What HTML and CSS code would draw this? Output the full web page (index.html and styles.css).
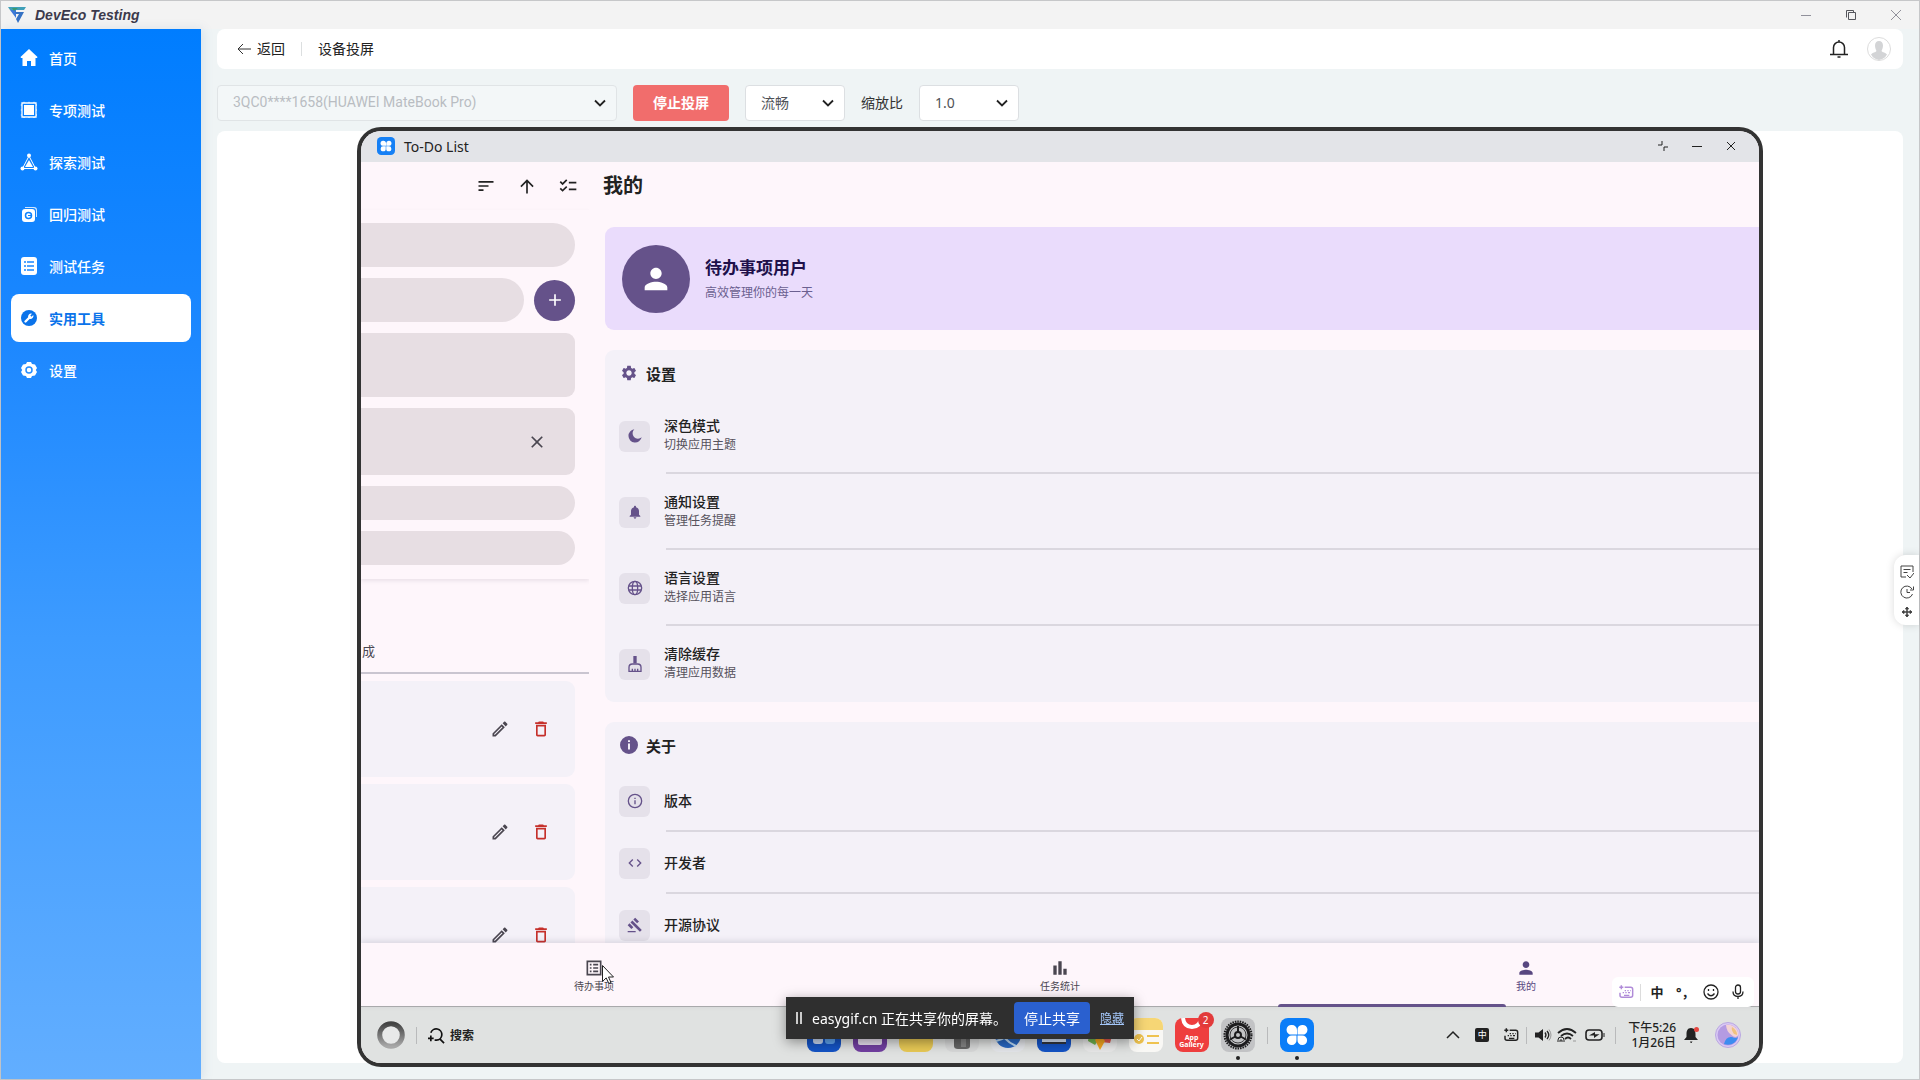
FILE: index.html
```html
<!DOCTYPE html>
<html lang="zh-CN">
<head>
    <meta charset="UTF-8">
    <meta name="viewport" content="width=device-width, initial-scale=1.0">
    <title>DevEco Testing</title>
    <link rel="stylesheet" href="styles.css">
</head>
<body>
    <!-- 图标库 -->
    <svg class="sprite" aria-hidden="true">
        <symbol id="i-chevron" viewBox="0 0 12 12"><path d="M1 3.5l5 5 5-5" fill="none" stroke="currentColor" stroke-width="1.8"/></symbol>
        <symbol id="i-person" viewBox="0 0 24 24"><path d="M12 12c2.2 0 4-1.8 4-4s-1.8-4-4-4-4 1.8-4 4 1.8 4 4 4zm0 2c-2.7 0-8 1.3-8 4v2h16v-2c0-2.7-5.300-4-8-4z"/></symbol>
        <symbol id="i-close" viewBox="0 0 24 24"><path d="M19 6.400L17.600 5 12 10.600 6.400 5 5 6.400 10.600 12 5 17.600 6.400 19 12 13.400 17.600 19 19 17.600 13.400 12z"/></symbol>
        <symbol id="i-edit" viewBox="0 0 24 24"><path d="M14.060 9.020l.920.920L5.920 19H5v-.920l9.060-9.060M17.660 3c-.250 0-.510.100-.700.290l-1.830 1.830 3.750 3.750 1.830-1.830c.390-.390.390-1.020 0-1.410l-2.340-2.340c-.200-.200-.450-.290-.710-.290zm-3.600 3.190L3 17.250V21h3.750L17.810 9.940l-3.750-3.750z"/></symbol>
        <symbol id="i-delete" viewBox="0 0 24 24"><path d="M6 19c0 1.100.9 2 2 2h8c1.100 0 2-.9 2-2V7H6v12zM8 9h8v10H8V9zm7.500-5l-1-1h-5l-1 1H5v2h14V4z"/></symbol>
        <symbol id="i-gear" viewBox="0 0 24 24"><path d="M19.140 12.940c.040-.300.060-.610.060-.940 0-.320-.020-.640-.070-.940l2.030-1.580c.180-.140.230-.410.120-.610l-1.920-3.320c-.120-.220-.370-.290-.590-.220l-2.390.960c-.500-.380-1.030-.700-1.620-.940l-.360-2.540c-.040-.240-.240-.410-.480-.410h-3.840c-.240 0-.430.170-.470.410l-.360 2.540c-.590.240-1.130.570-1.620.940l-2.390-.960c-.220-.080-.470 0-.590.220L2.740 8.870c-.120.210-.080.470.120.610l2.030 1.580c-.050.300-.090.630-.090.940s.020.640.070.940l-2.030 1.580c-.180.140-.230.410-.120.610l1.920 3.320c.120.220.370.290.590.220l2.390-.960c.500.380 1.030.700 1.620.940l.360 2.540c.050.240.240.410.480.410h3.840c.240 0 .440-.170.470-.410l.360-2.540c.590-.240 1.130-.560 1.620-.940l2.390.960c.220.080.470 0 .590-.220l1.920-3.320c.120-.220.070-.470-.120-.610l-2.010-1.580zM12 15.600c-1.980 0-3.600-1.620-3.600-3.600s1.620-3.600 3.600-3.600 3.600 1.620 3.600 3.600-1.620 3.600-3.600 3.600z"/></symbol>
        <symbol id="i-keyboard" viewBox="0 0 24 24"><path d="M10 5h9a3 3 0 013 3v9a3 3 0 01-3 3H6a3 3 0 01-3-3v-4M5 2v6M2 5h6" fill="none" stroke="currentColor" stroke-width="2.200"/><path d="M10 10h2M14 10h2M18 10h1M7 13h2M11 13h2M15 13h3M9 17h8" stroke="currentColor" stroke-width="2"/></symbol>
        <symbol id="i-clover" viewBox="0 0 34 34"><path d="M12 7a5 5 0 015 5v4.500h-5A4.800 4.800 0 1112 7zM22 7a4.800 4.800 0 110 9.500h-4.500V12A5 5 0 0122 7zM12 17.500h4.500V22a4.800 4.800 0 11-4.500-4.500zM17.500 17.500H22a4.800 4.800 0 11-4.500 4.500z" fill="#fff"/></symbol>
    </svg>

    <div class="window">
        <header class="titlebar">
            <svg class="logo" viewBox="0 0 18 16"><path d="M0 0h18l-2 3H2z" fill="#3f9fb8"/><path d="M2 3h6v8z" fill="#3c79d8"/><path d="M7 5h9l-6 11-2-4 3-5H8z" fill="#3672c4"/><path d="M4 1h6L6 4z" fill="#3a9a70"/></svg>
            <span class="app-name">DevEco Testing</span>
            <div class="window-controls">
                <button aria-label="最小化"><svg viewBox="0 0 12 12"><path d="M1 6.500h10"/></svg></button>
                <button class="restore" aria-label="还原"><svg viewBox="0 0 12 12"><path d="M3.500 3.500h7v7h-7zM1.500 8.500v-7h7v2"/></svg></button>
                <button aria-label="关闭"><svg viewBox="0 0 12 12"><path d="M1 1l10 10M11 1L1 11"/></svg></button>
            </div>
        </header>

        <div class="layout">
            <nav class="sidebar">
                <a href="#"><svg viewBox="0 0 18 18"><path d="M9 0l8.500 8-.5 1h-1.500v8H11v-5H7v5H2.500V9H1L.5 8z"/></svg>首页</a>
                <a href="#"><svg viewBox="0 0 18 18"><path d="M4 4h10v10H4z"/><path d="M2 2h14v14H2z" fill="none" stroke="#fff" stroke-width="1.300"/><path d="M4 .8v1M9 .8v1M14 .8v1M4 16v1M9 16v1M14 16v1M.8 4h1M.8 9h1M.8 14h1M16 4h1M16 9h1M16 14h1" stroke="#fff"/></svg>专项测试</a>
                <a href="#"><svg viewBox="0 0 18 18"><circle cx="9" cy="2.500" r="2"/><circle cx="2.500" cy="15.500" r="2"/><circle cx="15.500" cy="15.500" r="2"/><path d="M9 7l4 7H5z"/><path d="M9 3l6.500 12.500h-13z" fill="none" stroke="#fff"/></svg>探索测试</a>
                <a href="#"><svg viewBox="0 0 18 18"><path d="M5 3V2h9a3 3 0 013 3v7h-1V6a3 3 0 00-3-3z" opacity=".8"/><rect x="2" y="4" width="13" height="13" rx="3"/><circle cx="8.500" cy="10.500" r="3" fill="none" stroke="#0d82ff" stroke-width="1.500"/><path d="M8 10.500h3" stroke="#0d82ff"/></svg>回归测试</a>
                <a href="#"><svg viewBox="0 0 18 18"><rect x="1" y="0" width="16" height="18" rx="3"/><path d="M4 5h2M7 5h7M4 9h2M7 9h7M4 13h2M7 13h7" stroke="#1a87ff" stroke-width="1.500"/></svg>测试任务</a>
                <a href="#" class="active"><svg viewBox="0 0 18 18"><circle cx="9" cy="9" r="8"/><path d="M5.500 12.500l4-4" stroke="#fff" stroke-width="2.400" stroke-linecap="round"/><path d="M12 4.700a3 3 0 00-3.800 3.800l1.300 1.300a3 3 0 003.800-3.800l-1.800 1.700-1.200-1.200z" fill="#fff"/></svg>实用工具</a>
                <a href="#"><svg viewBox="0 0 18 18"><path d="M7 1h4l1 2 3 .5 2 3.500-1.200 2L17 11l-2 3.500-3 .5-1 2H7l-1-2-3-.5L1 11l1.200-2L1 7l2-3.500L6 3z"/><circle cx="9" cy="9" r="3" fill="none" stroke="#258dff" stroke-width="1.500"/></svg>设置</a>
            </nav>

            <main class="main">
                <div class="page-head">
                    <a class="back" href="#"><svg viewBox="0 0 14 12"><path d="M6 1L1 6l5 5M1 6h13"/></svg>返回</a>
                    <span class="page-name">设备投屏</span>
                    <button class="icon-btn" aria-label="消息"><svg viewBox="0 0 18 18"><path d="M3.500 14.500V7.500a5.500 5.500 0 0111 0v7M0 14.500h18M9 0v2M7.500 17h3"/></svg></button>
                    <button class="avatar" aria-label="用户"><svg viewBox="0 0 24 24"><circle cx="12" cy="12" r="11.500" fill="#fff" stroke="#dcdcdc"/><path d="M12 4c2.500 0 4 2 4 4.500S15 13 14.500 14c1 1.500 4 1.500 5.500 3.500A11 11 0 0112 23a11 11 0 01-8-5.500C5.500 15.500 8.500 15.500 9.500 14 9 13 8 11 8 8.500S9.500 4 12 4z" fill="#d3d4d6"/></svg></button>
                </div>

                <div class="toolbar">
                    <div class="select-box device-select">
                        <select aria-label="设备" disabled><option>3QC0****1658(HUAWEI MateBook Pro)</option></select>
                        <svg><use href="#i-chevron"/></svg>
                    </div>
                    <button class="stop-btn">停止投屏</button>
                    <div class="select-box">
                        <select aria-label="画质"><option>流畅</option></select>
                        <svg><use href="#i-chevron"/></svg>
                    </div>
                    <label for="scale">缩放比</label>
                    <div class="select-box">
                        <select id="scale"><option>1.0</option></select>
                        <svg><use href="#i-chevron"/></svg>
                    </div>
                </div>

                <section class="cast-panel">
                    <div class="device">
                        <div class="device-title">
                            <svg class="todo-icon" viewBox="0 0 34 34"><rect width="34" height="34" rx="8" fill="#1680f5"/><use href="#i-clover"/></svg>
                            <span>To-Do List</span>
                            <div class="device-controls">
                                <button aria-label="缩小"><svg viewBox="0 0 12 12"><path d="M5 1v4H1M7 11V7h4"/></svg></button>
                                <button aria-label="最小化"><svg viewBox="0 0 12 12"><path d="M1 6.500h10"/></svg></button>
                                <button aria-label="关闭"><svg viewBox="0 0 12 12"><path d="M2 2l8 8M10 2l-8 8"/></svg></button>
                            </div>
                        </div>

                        <div class="app">
                            <div class="list-pane">
                                <div class="list-tools">
                                    <button aria-label="排序"><svg viewBox="0 0 24 24"><path d="M3 18h6v-2H3v2zM3 6v2h18V6H3zm0 7h12v-2H3v2z"/></svg></button>
                                    <button aria-label="升序"><svg viewBox="0 0 24 24"><path d="M4 12l1.400 1.400L11 7.800V21h2V7.800l5.600 5.600L20 12l-8-8z"/></svg></button>
                                    <button aria-label="多选"><svg viewBox="0 0 24 24"><path d="M22 7h-9v2h9V7zm0 8h-9v2h9v-2zM5.500 11L2 7.500l1.400-1.400 2.100 2.100 4.300-4.200 1.400 1.400L5.500 11zm0 8L2 15.500l1.400-1.400 2.100 2.100 4.300-4.200 1.400 1.400L5.500 19z"/></svg></button>
                                </div>
                                <div class="form">
                                    <div class="field pill"></div>
                                    <div class="field-row">
                                        <div class="field pill"></div>
                                        <button class="add-btn" aria-label="添加"><svg viewBox="0 0 24 24"><path d="M19 13h-6v6h-2v-6H5v-2h6V5h2v6h6z"/></svg></button>
                                    </div>
                                    <div class="field"></div>
                                    <div class="field tall"><button aria-label="清除"><svg><use href="#i-close"/></svg></button></div>
                                    <div class="field chip"></div>
                                    <div class="field chip"></div>
                                </div>
                                <div class="tabs">成</div>
                                <div class="tasks">
                                    <div class="task">
                                        <button aria-label="编辑"><svg><use href="#i-edit"/></svg></button>
                                        <button class="del" aria-label="删除"><svg><use href="#i-delete"/></svg></button>
                                    </div>
                                    <div class="task">
                                        <button aria-label="编辑"><svg><use href="#i-edit"/></svg></button>
                                        <button class="del" aria-label="删除"><svg><use href="#i-delete"/></svg></button>
                                    </div>
                                    <div class="task">
                                        <button aria-label="编辑"><svg><use href="#i-edit"/></svg></button>
                                        <button class="del" aria-label="删除"><svg><use href="#i-delete"/></svg></button>
                                    </div>
                                </div>
                            </div>

                            <div class="mine-pane">
                                <h1>我的</h1>
                                <div class="cards">
                                    <div class="profile">
                                        <div class="profile-icon"><svg><use href="#i-person"/></svg></div>
                                        <div>
                                            <strong>待办事项用户</strong>
                                            <p>高效管理你的每一天</p>
                                        </div>
                                    </div>

                                    <div class="card">
                                        <h2><svg><use href="#i-gear"/></svg>设置</h2>
                                        <div class="item">
                                            <span class="item-icon"><svg viewBox="0 0 24 24"><path d="M11 2a10 10 0 1011 12 6.500 6.500 0 01-11-12z"/></svg></span>
                                            <div class="item-text"><b>深色模式</b><small>切换应用主题</small></div>
                                        </div>
                                        <div class="item">
                                            <span class="item-icon"><svg viewBox="0 0 24 24"><path d="M12 22c1.100 0 2-.9 2-2h-4c0 1.100.9 2 2 2zm6-6v-5c0-3.100-1.600-5.600-4.500-6.300V4c0-.8-.7-1.500-1.500-1.500s-1.500.7-1.500 1.500v.7C7.600 5.400 6 7.900 6 11v5l-2 2v1h16v-1z"/></svg></span>
                                            <div class="item-text"><b>通知设置</b><small>管理任务提醒</small></div>
                                        </div>
                                        <div class="item">
                                            <span class="item-icon"><svg class="line" viewBox="0 0 24 24"><circle cx="12" cy="12" r="10"/><ellipse cx="12" cy="12" rx="4" ry="10"/><path d="M3 9h18M3 15h18"/></svg></span>
                                            <div class="item-text"><b>语言设置</b><small>选择应用语言</small></div>
                                        </div>
                                        <div class="item">
                                            <span class="item-icon"><svg viewBox="0 0 24 24"><path d="M9.500 0h5v11h-5z"/><path class="line" d="M3 23v-6a5 5 0 015-5h8a5 5 0 015 5v6zM8 23v-4M12 23v-4M16 23v-4"/></svg></span>
                                            <div class="item-text"><b>清除缓存</b><small>清理应用数据</small></div>
                                        </div>
                                    </div>

                                    <div class="card about">
                                        <h2><svg viewBox="0 0 24 24"><path d="M12 0a12 12 0 100 24 12 12 0 000-24zm1.300 18h-2.600v-8h2.600zm0-10h-2.600V5.500h2.600z"/></svg>关于</h2>
                                        <div class="item">
                                            <span class="item-icon"><svg class="line" viewBox="0 0 24 24"><circle cx="12" cy="12" r="10"/><path d="M12 11v6M12 7v2"/></svg></span>
                                            <div class="item-text"><b>版本</b></div>
                                        </div>
                                        <div class="item">
                                            <span class="item-icon"><svg viewBox="0 0 24 24"><path d="M9.400 16.600L4.800 12l4.600-4.600L8 6l-6 6 6 6 1.400-1.400zm5.200 0l4.600-4.600-4.600-4.600L16 6l6 6-6 6-1.400-1.400z"/></svg></span>
                                            <div class="item-text"><b>开发者</b></div>
                                        </div>
                                        <div class="item">
                                            <span class="item-icon"><svg viewBox="0 0 24 24"><path d="M1 21h12v2H1v-2zM5.200 8.100l2.900-2.900 14.100 14.200-2.800 2.800L5.200 8.100zM12.300 1l5.700 5.700-2.900 2.800-5.600-5.700L12.300 1zM3.800 9.500l5.700 5.700L6.600 18 1 12.300l2.800-2.800z"/></svg></span>
                                            <div class="item-text"><b>开源协议</b></div>
                                        </div>
                                    </div>
                                </div>
                            </div>
                        </div>

                        <nav class="app-nav">
                            <a href="#"><svg viewBox="0 0 24 24"><path d="M19 5v14H5V5h14m2-2H3v18h18zM11 7h6v2h-6V7zm0 4h6v2h-6v-2zm0 4h6v2h-6zM7 7h2v2H7zm0 4h2v2H7zm0 4h2v2H7z"/></svg>待办事项</a>
                            <a href="#"><svg viewBox="0 0 24 24"><path d="M4 9h4v11H4zM10 4h4v16h-4zM16 13h4v7h-4z"/></svg>任务统计</a>
                            <a href="#" class="active"><svg><use href="#i-person"/></svg>我的</a>
                        </nav>

                        <div class="taskbar">
                            <div class="task-left">
                                <svg class="ring" viewBox="0 0 28 28"><defs><linearGradient id="ring" x2="0" y2="1"><stop stop-color="#444"/><stop offset="1" stop-color="#a8a8a8"/></linearGradient></defs><circle cx="14" cy="14" r="11.300" fill="#f4f4f4" fill-opacity=".4" stroke="url(#ring)" stroke-width="5"/></svg>
                                <span class="sep"></span>
                                <svg class="search" viewBox="0 0 18 18"><path d="M3 6a6 6 0 116 8H7M13 13l4 4M3 9v6M0 12h6"/></svg>
                                <span>搜索</span>
                            </div>
                            <div class="dock">
                                <svg viewBox="0 0 34 34"><rect width="34" height="34" rx="8" fill="#1453c4"/><rect x="6" y="8" width="10" height="18" rx="3" fill="#c7d5ef"/><rect x="18" y="8" width="10" height="18" rx="3" fill="#5fa3ee"/></svg>
                                <svg viewBox="0 0 34 34"><rect width="34" height="34" rx="8" fill="#713fa0"/><rect x="5" y="8" width="24" height="19" rx="2" fill="#e8e0ef"/></svg>
                                <svg viewBox="0 0 34 34"><rect width="34" height="34" rx="8" fill="#e8c955"/><path d="M0 12h34v8H0z" fill="#bfbf51"/></svg>
                                <svg viewBox="0 0 34 34"><rect width="34" height="34" rx="8" fill="#d8d9d9"/><path d="M9 6h16v22q0 3-4 3h-8q-4 0-4-3z" fill="#656565"/><path d="M16 8h5v21h-5z" fill="#858585"/></svg>
                                <svg viewBox="0 0 34 34"><rect width="34" height="34" rx="8" fill="#e4e6ea"/><circle cx="17" cy="17" r="13" fill="#2867c2"/><path d="M5 23q12-2 20-16M8 8q3 14 17 20" fill="none" stroke="#bcd9f4" stroke-width="2"/></svg>
                                <svg viewBox="0 0 34 34"><rect width="34" height="34" rx="8" fill="#1453c4"/><rect x="5" y="7" width="24" height="18" fill="#d6e3f7"/><path d="M5 25h24" stroke="#30343d" stroke-width="2"/></svg>
                                <svg viewBox="0 0 34 34"><rect width="34" height="34" rx="8" fill="#e9e9e9"/><path d="M6 16l10 5-4 6-7-4z" fill="#71b24f"/><path d="M15 16l14 2-2 7-9-1z" fill="#df574e"/><path d="M12 22l5-5 5 6-5 9z" fill="#f3a51e"/></svg>
                                <svg viewBox="0 0 34 34"><rect width="34" height="34" rx="8" fill="#f9f8f5"/><path d="M0 12V8a8 8 0 018-8h18a8 8 0 018 8v4z" fill="#f6d675"/><circle cx="10" cy="21" r="5" fill="#efc34f"/><path d="M8 21l2 2 3-4" fill="none" stroke="#fff"/><path d="M18 18h12M18 25h12" stroke="#efc34f" stroke-width="2"/></svg>
                                <div class="dock-app">
                                    <span class="gallery"><svg viewBox="0 0 34 16"><path d="M8 0q1 9 9 9t9-9" fill="none" stroke="#fff" stroke-width="4"/></svg>App<br>Gallery</span>
                                    <span class="badge">2</span>
                                </div>
                                <div class="dock-app running">
                                    <svg viewBox="0 0 34 34"><rect width="34" height="34" rx="8" fill="#c2c3c5"/><circle cx="17" cy="17" r="13.500" fill="none" stroke="#1c1c1e" stroke-width="2" stroke-dasharray="1.500 1"/><circle cx="17" cy="17" r="11" fill="none" stroke="#1c1c1e" stroke-width="3"/><circle cx="17" cy="17" r="8" fill="none" stroke="#3a3a3c"/><circle cx="17" cy="17" r="3" fill="none" stroke="#1c1c1e" stroke-width="2"/><path d="M17 14V8M14.400 18.500L9 21.500M19.600 18.500l5.400 3" stroke="#1c1c1e" stroke-width="2"/></svg>
                                </div>
                                <span class="sep"></span>
                                <div class="dock-app running">
                                    <svg viewBox="0 0 34 34"><rect width="34" height="34" rx="8" fill="#0a7df8"/><use href="#i-clover"/></svg>
                                </div>
                            </div>
                            <div class="tray">
                                <svg viewBox="0 0 14 14"><path d="M1 10l6-6 6 6" fill="none" stroke="#222" stroke-width="1.500"/></svg>
                                <span class="lang">中</span>
                                <svg class="kbd"><use href="#i-keyboard"/></svg>
                                <span class="sep"></span>
                                <svg class="wide" viewBox="0 0 18 14"><path d="M1 4.500h3.500L9 1v12L4.500 9.500H1z"/><path d="M11 4.500q2 2.500 0 5M13 3q3.500 4 0 8" fill="none" stroke="#222" stroke-width="1.300"/><path d="M15 1.500q4 5.500 0 11" fill="none" stroke="#999"/></svg>
                                <svg class="wifi" viewBox="0 0 20 16"><path d="M1 6q9-8 18 0M4 9q6-5 12 0M8 12q3-3 6 0" fill="none" stroke="#222" stroke-width="1.800"/><path d="M1 15v-2a3 3 0 016 0v2M3 15v-2h2v2" fill="none" stroke="#222"/><path d="M16 14h3" stroke="#999"/></svg>
                                <svg class="wifi" viewBox="0 0 20 16"><rect x="1" y="3" width="16" height="10" rx="3" fill="none" stroke="#222" stroke-width="1.600"/><path d="M4 8.500L10 5v2.300h4.500L9 11V8.500zM18.500 6h1v4h-1z"/></svg>
                                <span class="sep"></span>
                                <time>下午5:26<br>1月26日</time>
                                <svg class="bell" viewBox="0 0 16 16"><path d="M7 14.500h2.500L8.500 16H7.700zM8 1C4.500 1 3.500 4 3.500 7v3L1 13h14l-2.500-3V7c0-3-1-6-4.500-6z"/><circle cx="13.500" cy="2.500" r="2.500" fill="#e5453f"/></svg>
                                <svg class="orb" viewBox="0 0 26 26"><circle cx="13" cy="13" r="12.500" fill="#d9c8f4" stroke="#b9a8e0"/><circle cx="13" cy="13" r="10.500" fill="#b49be2"/><path d="M11 3a10.500 10.500 0 0112.500 10q-3 4-7 0-5-3-5.500-10z" fill="#f3d3d4"/><path d="M17 5q5 3 5 8l-3-1q-3-4-2-7z" fill="#f0c27d"/><path d="M9 22q2-8 8-7 4 2 6 0a10.500 10.500 0 01-14 7z" fill="#3d8df0"/></svg>
                            </div>
                        </div>

                        <!-- 输入法悬浮条 -->
                        <div class="ime">
                            <svg class="ime-kbd"><use href="#i-keyboard"/></svg>
                            <span class="sep"></span>
                            <b>中</b>
                            <b>°，</b>
                            <svg viewBox="0 0 16 16"><circle cx="8" cy="8" r="7"/><path d="M4.500 9.500q3.500 4.500 7 0M5.500 5v2M10.500 5v2"/></svg>
                            <svg viewBox="0 0 16 16"><rect x="5.500" y="1" width="5" height="9" rx="2.500"/><path d="M3 7.500q0 5 5 5t5-5M8 12.500V15"/></svg>
                        </div>
                        <svg class="cursor" viewBox="0 0 12 19"><path d="M.5.500v16l3.700-3.600 2.600 5.600 2.200-1-2.500-5.500h5z" fill="#fff" stroke="#222"/></svg>
                    </div>
                </section>
            </main>
        </div>
    </div>

    <div class="share-bar">
        <span class="pause"></span>
        <span>easygif.cn 正在共享你的屏幕。</span>
        <button>停止共享</button>
        <a href="#">隐藏</a>
    </div>

    <aside class="float-tools">
        <button aria-label="反馈"><svg viewBox="0 0 14 14"><path d="M13 7V1H1v11h5M3.500 4.500h7M3.500 7.500h4M7 10l3 3 4-5"/></svg></button>
        <button aria-label="历史"><svg viewBox="0 0 14 14"><path d="M12.500 9A6 6 0 1112 4M13.500 1.500V5H10M7 4v3.500h3"/></svg></button>
        <button aria-label="移动"><svg viewBox="0 0 14 14"><path d="M7 3v8M3 7h8" stroke-width="1.500"/><path d="M7 2L5.500 4h3zM7 12l-1.500-2h3zM2 7l2-1.500v3zM12 7l-2-1.500v3z" fill="#333"/></svg></button>
    </aside>
</body>
</html>
```

FILE: styles.css
```css
* {
    box-sizing: border-box;
}
body {
    margin: 0;
    font-family: "Noto Sans", "Noto Sans CJK SC", sans-serif;
    font-size: 14px;
    color: #222;
    background: #eff4f5;
}
button {
    display: flex;
    align-items: center;
    justify-content: center;
    padding: 0;
    border: none;
    background: none;
    font: inherit;
    color: inherit;
    cursor: pointer;
}
a {
    color: inherit;
    text-decoration: none;
}
h1, h2, p {
    margin: 0;
}
svg {
    flex: none;
    fill: currentColor;
}
.sprite {
    position: absolute;
    width: 0;
    height: 0;
}
.sep {
    width: 1px;
    height: 17px;
    background: #b9babb;
}

/* 窗口 */
.window {
    display: flex;
    flex-direction: column;
    height: 100vh;
    border: 1px solid #c6c7c9;
}
.titlebar {
    display: flex;
    align-items: center;
    height: 28px;
    padding: 0 17px 0 7px;
    background: #f3f3f3;
}
.logo {
    width: 18px;
    height: 16px;
}
.app-name {
    margin-left: 9px;
    font: italic bold 14px "Liberation Sans", sans-serif;
    color: #3c3a4c;
}
.window-controls {
    display: flex;
    gap: 33px;
    margin-left: auto;
    color: #91919b;
}
.window-controls svg,
.device-controls svg {
    width: 12px;
    height: 12px;
    fill: none;
    stroke: currentColor;
}
.window-controls .restore {
    color: #55565c;
}
.layout {
    display: flex;
    flex: 1;
    min-height: 0;
}

/* 侧边栏 */
.sidebar {
    flex: none;
    display: flex;
    flex-direction: column;
    gap: 4px;
    width: 200px;
    padding: 5px 10px;
    background: linear-gradient(#007dff, #1d88ff 30%, #3d9bff 58%, #62aeff);
    box-shadow: 2px 0 10px rgba(80, 120, 170, 0.15);
}
.sidebar a {
    display: flex;
    align-items: center;
    gap: 11px;
    height: 48px;
    padding-left: 9px;
    border-radius: 8px;
    font-weight: 500;
    color: #fff;
}
.sidebar svg {
    width: 18px;
    height: 18px;
}
.sidebar .active {
    background: #fff;
    color: #0a73ea;
    font-weight: 700;
}

/* 主区域 */
.main {
    flex: 1;
    display: flex;
    flex-direction: column;
    min-width: 0;
    padding: 0 16px;
}
.page-head {
    display: flex;
    align-items: center;
    height: 40px;
    padding: 0 12px 0 20px;
    border-radius: 8px;
    background: #fff;
}
.back {
    display: flex;
    align-items: center;
    gap: 6px;
    line-height: 18px;
}
.back svg {
    width: 14px;
    height: 12px;
    fill: none;
    stroke: #333;
}
.page-name {
    margin-left: 16px;
    padding-left: 16px;
    line-height: 14px;
    border-left: 1px solid #dcdfe0;
}
.icon-btn {
    margin-left: auto;
}
.icon-btn svg {
    width: 18px;
    height: 18px;
    fill: none;
    stroke: #222;
    stroke-width: 1.5;
}
.avatar {
    margin-left: 19px;
}
.avatar svg {
    width: 24px;
    height: 24px;
}
.toolbar {
    display: flex;
    align-items: center;
    gap: 16px;
    padding: 16px 0 10px;
}
.select-box {
    position: relative;
    width: 100px;
}
.select-box select {
    width: 100%;
    height: 36px;
    padding: 0 15px 2px;
    appearance: none;
    border: 1px solid #dcdfe2;
    border-radius: 4px;
    background: #fff;
    font: inherit;
    color: #4f5257;
    opacity: 1;
}
.select-box svg {
    position: absolute;
    top: 12px;
    right: 11px;
    width: 12px;
    height: 12px;
    pointer-events: none;
}
.device-select {
    width: 400px;
}
.device-select select:disabled {
    background: #f3f7f8;
    border-color: #e0e4e6;
    font-family: Roboto, "Noto Sans CJK SC", sans-serif;
    color: #b9bdc2;
}
.toolbar label {
    padding-bottom: 2px;
    color: #333;
}
.stop-btn {
    width: 96px;
    height: 36px;
    padding-bottom: 2px;
    border-radius: 4px;
    background: #f16d6c;
    color: #fff;
    font-weight: 700;
}
.cast-panel {
    flex: 1;
    display: flex;
    justify-content: center;
    min-height: 0;
    margin-bottom: 16px;
    border-radius: 8px;
    background: #fff;
}

/* 投屏设备 */
.device {
    position: relative;
    display: flex;
    flex-direction: column;
    height: 100%;
    aspect-ratio: 3 / 2;
    border-radius: 20px;
    box-shadow: 0 0 0 4px #333;
    background: #fef6fb;
    overflow: hidden;
}
.device-title {
    flex: none;
    display: flex;
    align-items: center;
    gap: 9px;
    height: 31px;
    padding: 0 22px 1px 16px;
    background: #e3e4e8;
}
.todo-icon {
    width: 18px;
    height: 18px;
}
.device-controls {
    display: flex;
    gap: 22px;
    margin-left: auto;
}
.app {
    flex: 1;
    display: flex;
    min-height: 0;
    overflow: hidden;
}

/* 左侧任务列表 */
.list-pane {
    flex: none;
    width: 228px;
    overflow: hidden;
}
.list-pane svg {
    width: 20px;
    height: 20px;
}
.list-tools {
    display: flex;
    align-items: center;
    justify-content: flex-end;
    gap: 21px;
    height: 48px;
    padding-right: 11px;
}
.form {
    display: flex;
    flex-direction: column;
    gap: 11px;
    padding: 13px 14px 14px 0;
    box-shadow: 0 2px 4px rgba(90, 80, 110, 0.12);
}
.field {
    flex: none;
    display: flex;
    align-items: center;
    justify-content: flex-end;
    height: 64px;
    padding-right: 28px;
    border-radius: 0 9px 9px 0;
    background: #e7dee3;
    color: #4a4650;
}
.field.pill {
    height: 44px;
    border-radius: 0 22px 22px 0;
}
.field.tall {
    height: 67px;
}
.field.chip {
    height: 34px;
    border-radius: 0 17px 17px 0;
}
.field-row {
    display: flex;
    align-items: center;
    gap: 10px;
}
.field-row .field {
    flex: 1;
}
.add-btn {
    width: 41px;
    height: 41px;
    border-radius: 50%;
    background: #65528a;
    color: #fff;
}
.tabs {
    display: flex;
    align-items: flex-end;
    height: 95px;
    padding: 0 0 12px 1px;
    border-bottom: 2px solid #cac5d0;
    font-size: 13px;
    color: #4a4650;
}
.tasks {
    display: flex;
    flex-direction: column;
    gap: 7px;
    padding: 7px 14px 0 0;
}
.task {
    display: flex;
    align-items: center;
    justify-content: flex-end;
    gap: 21px;
    height: 96px;
    padding-right: 24px;
    border-radius: 0 9px 9px 0;
    background: #f4f1f8;
    color: #4a4650;
}
.task .del {
    color: #c5302b;
}

/* 右侧「我的」 */
.mine-pane {
    flex: 1;
    min-width: 0;
    overflow: hidden;
}
.mine-pane h1 {
    padding-left: 14px;
    line-height: 48px;
    font-size: 20px;
}
.cards {
    display: flex;
    flex-direction: column;
    gap: 20px;
    padding: 17px 0 0 16px;
}
.profile {
    display: flex;
    align-items: center;
    gap: 15px;
    height: 103px;
    padding-left: 17px;
    border-radius: 9px 0 0 9px;
    background: #eadcfc;
    color: #20104a;
}
.profile-icon {
    display: flex;
    align-items: center;
    justify-content: center;
    width: 68px;
    height: 68px;
    border-radius: 50%;
    background: #65528a;
    color: #fff;
}
.profile-icon svg {
    width: 34px;
    height: 34px;
}
.profile strong {
    display: block;
    padding-top: 2px;
    font-size: 17px;
    line-height: 26px;
}
.profile p {
    font-size: 12px;
    line-height: 24px;
    color: #6b6090;
}
.card {
    border-radius: 9px 0 0 9px;
    background: #f4f1f8;
}
.card h2 {
    display: flex;
    align-items: center;
    gap: 8px;
    height: 48px;
    padding: 0 0 2px 15px;
    font-size: 15px;
}
.card h2 svg {
    width: 18px;
    height: 18px;
    color: #65528a;
}
.item {
    display: flex;
    align-items: center;
    gap: 14px;
    height: 76px;
    padding-left: 14px;
}
.about .item {
    height: 62px;
}
/* 分隔线从文字处开始 */
.item:not(:last-child) {
    background: linear-gradient(#dad7df, #dad7df) 61px 100% / 100% 2px no-repeat;
}
.item-icon {
    display: flex;
    align-items: center;
    justify-content: center;
    width: 31px;
    height: 31px;
    border-radius: 6px;
    background: #e5e1ea;
    color: #65528a;
}
.item-icon svg {
    width: 16px;
    height: 16px;
    overflow: visible;
}
.item-icon .line {
    fill: none;
    stroke: currentColor;
    stroke-width: 2;
}
.item-text b {
    display: block;
    font-weight: 500;
    line-height: 18px;
}
.item-text small {
    display: block;
    font-size: 12px;
    line-height: 20px;
    color: #56525c;
}

/* 底部导航 */
.app-nav {
    position: relative;
    flex: none;
    display: flex;
    height: 64px;
    border-bottom: 1px solid #a9a9ab;
    box-shadow: 0 -2px 6px rgba(60, 50, 80, 0.14);
}
.app-nav a {
    flex: 1;
    display: flex;
    flex-direction: column;
    align-items: center;
    padding-top: 15px;
    font-size: 10px;
    line-height: 16px;
    color: #4a4650;
}
.app-nav svg {
    width: 20px;
    height: 20px;
}
.app-nav .active {
    color: #584780;
}
.app-nav::after {
    content: "";
    position: absolute;
    left: 65.6%;
    bottom: -1px;
    width: 16.3%;
    height: 3px;
    border-radius: 3px 3px 0 0;
    background: #65528a;
}

/* 任务栏 */
.taskbar {
    flex: none;
    display: grid;
    grid-template-columns: 1fr auto 1fr;
    align-items: center;
    height: 56px;
    background: #e0e2e1;
}
.task-left {
    display: flex;
    align-items: center;
    padding-left: 16px;
    font-size: 12px;
    font-weight: 700;
}
.ring {
    width: 28px;
    height: 28px;
}
.task-left .sep {
    margin: 0 11px;
}
.search {
    width: 17px;
    height: 17px;
    margin-right: 5px;
    fill: none;
    stroke: #111;
    stroke-width: 1.8;
}
.dock {
    display: flex;
    align-items: center;
    gap: 12px;
}
.dock > svg,
.dock-app,
.dock-app > svg {
    display: block;
    width: 34px;
    height: 34px;
}
.dock-app {
    position: relative;
}
.running::after {
    content: "";
    position: absolute;
    left: 15px;
    bottom: -8px;
    width: 4px;
    height: 4px;
    border-radius: 50%;
    background: #222;
}
.gallery {
    display: block;
    height: 34px;
    border-radius: 8px;
    background: #ee3e3e;
    color: #fff;
    font-size: 7px;
    font-weight: 700;
    line-height: 7px;
    text-align: center;
}
.gallery svg {
    display: block;
    width: 34px;
    height: 16px;
}
.badge {
    position: absolute;
    top: -6px;
    right: -5px;
    width: 16px;
    height: 16px;
    border-radius: 50%;
    background: #e23b3b;
    color: #fff;
    font-size: 10px;
    line-height: 16px;
    text-align: center;
}
.tray {
    display: flex;
    align-items: center;
    justify-content: flex-end;
    padding-right: 18px;
}
.tray svg {
    width: 14px;
    height: 14px;
}
.lang {
    width: 14px;
    height: 14px;
    margin: 0 14px 0 15px;
    border-radius: 2px;
    background: #222;
    color: #fff;
    font-size: 9px;
    line-height: 14px;
    text-align: center;
}
.tray .kbd {
    width: 16px;
    height: 16px;
}
.tray .sep {
    margin: 0 7px;
}
.tray .wide {
    width: 18px;
}
.tray .wifi {
    width: 20px;
    height: 16px;
    margin-left: 5px;
}
.tray .wifi + .wifi {
    margin-left: 8px;
}
.tray .wifi + .sep {
    margin: 0 12px 0 10px;
}
.tray time {
    font-size: 12px;
    font-weight: 500;
    line-height: 15px;
    text-align: right;
}
.tray .bell {
    width: 16px;
    height: 16px;
    margin: 0 16px 0 7px;
}
.tray .orb {
    width: 26px;
    height: 26px;
}
.ime {
    position: absolute;
    right: 5px;
    bottom: 56px;
    display: flex;
    align-items: center;
    gap: 11px;
    width: 142px;
    height: 30px;
    padding: 0 6px;
    border-radius: 6px;
    background: #fff;
}
.ime svg {
    width: 16px;
    height: 16px;
    fill: none;
    stroke: #222;
    stroke-width: 1.3;
}
.ime .ime-kbd {
    color: #b08bd8;
    stroke: none;
}
.ime .sep {
    margin: 0 -3px 0 -5px;
    background: #dcdcdc;
}
.ime b {
    width: 16px;
    font-size: 13px;
    line-height: 16px;
    text-align: center;
    white-space: nowrap;
}
.cursor {
    position: absolute;
    left: 241px;
    top: 834px;
    width: 12px;
    height: 19px;
}

/* 屏幕共享提示 */
.share-bar {
    position: fixed;
    left: 50%;
    bottom: 41px;
    transform: translateX(-50%);
    display: flex;
    align-items: center;
    width: 348px;
    height: 42px;
    padding: 0 10px;
    background: #2f2f2f;
    box-shadow: 0 3px 12px rgba(0, 0, 0, 0.4);
    color: #fff;
    white-space: nowrap;
}
.pause {
    width: 6px;
    height: 12px;
    margin-right: 10px;
    border: solid #ccc;
    border-width: 0 2px;
}
.share-bar button {
    width: 76px;
    height: 32px;
    margin: 0 10px 0 auto;
    border-radius: 4px;
    background: #2a60cf;
}
.share-bar a {
    color: #a4c7fa;
    font-size: 12px;
    text-decoration: underline;
}

/* 右侧悬浮工具 */
.float-tools {
    position: fixed;
    right: 1px;
    top: 555px;
    display: flex;
    flex-direction: column;
    align-items: center;
    justify-content: center;
    gap: 6px;
    width: 25px;
    height: 70px;
    padding-top: 4px;
    border-radius: 12px 0 0 12px;
    background: #fff;
    box-shadow: 0 0 8px rgba(0, 0, 0, 0.15);
}
.float-tools svg {
    width: 14px;
    height: 14px;
    fill: none;
    stroke: #444;
}
```
